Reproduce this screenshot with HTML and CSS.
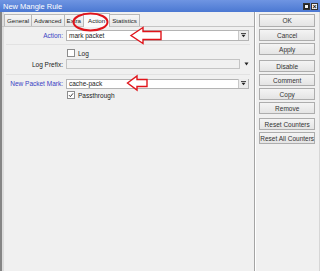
FILE: index.html
```html
<!DOCTYPE html>
<html lang="en">
<head>
    <meta charset="UTF-8">
    <title>New Mangle Rule</title>
    <link rel="stylesheet" href="styles.css">
</head>
<body>
<div class="window">
    <div class="titlebar">
        <span class="title">New Mangle Rule</span>
        <span class="ctrls">
            <span class="ctrl"><span class="sq"></span></span>
            <span class="ctrl close">&times;</span>
        </span>
    </div>

    <div class="content">
        <!-- left: tabs and form -->
        <div class="main">
            <div class="tabs">
                <span class="tab">General</span>
                <span class="tab">Advanced</span>
                <span class="tab">Extra</span>
                <span class="tab active">Action</span>
                <span class="tab">Statistics</span>
            </div>

            <div class="panel">
                <div class="row">
                    <label class="lbl link">Action:</label>
                    <div class="field">
                        <span class="val">mark packet</span>
                        <span class="drop"><svg width="5" height="5" viewBox="0 0 5 5"><path d="M0 0.5h5" stroke="#222" stroke-width="0.8"/><path d="M0.5 1.8h4L2.5 4.3z" fill="#222"/></svg></span>
                    </div>
                </div>
                <div class="sep"></div>
                <div class="row check-row">
                    <span class="box"></span>
                    <span class="check-label">Log</span>
                </div>
                <div class="row short">
                    <label class="lbl">Log Prefix:</label>
                    <div class="field disabled"></div>
                    <span class="loose-drop"><svg width="5" height="4" viewBox="0 0 5 4"><path d="M0.5 0.5h4L2.5 3.5z" fill="#222"/></svg></span>
                </div>
                <div class="sep wide"></div>
                <div class="row npm">
                    <label class="lbl link">New Packet Mark:</label>
                    <div class="field">
                        <span class="val">cache-pack</span>
                        <span class="drop"><svg width="5" height="5" viewBox="0 0 5 5"><path d="M0 0.5h5" stroke="#222" stroke-width="0.8"/><path d="M0.5 1.8h4L2.5 4.3z" fill="#222"/></svg></span>
                    </div>
                </div>
                <div class="row check-row pass">
                    <span class="box checked"><svg width="6" height="6" viewBox="0 0 6 6"><path d="M1 3.2l1.4 1.4L5 1.4" fill="none" stroke="#222" stroke-width="0.9"/></svg></span>
                    <span class="check-label">Passthrough</span>
                </div>
            </div>

            <!-- red annotations drawn over the form -->
            <svg class="marks" width="255" height="100" viewBox="0 0 255 100">
                <ellipse cx="90.5" cy="10" rx="17" ry="8.5" fill="none" stroke="#e0141b" stroke-width="2"/>
                <path d="M131 23.5 L143 15.5 L143 19.5 L161 19.5 L161 27.5 L143 27.5 L143 31.5 Z" fill="#fff" stroke="#e0141b" stroke-width="1.4" stroke-linejoin="miter"/>
                <path d="M127.5 71 L137 64 L137 67.5 L147 67.5 L147 74.5 L137 74.5 L137 78 Z" fill="#fff" stroke="#e0141b" stroke-width="1.4"/>
            </svg>
        </div>

        <!-- right: command buttons -->
        <div class="side">
            <button class="btn first">OK</button>
            <button class="btn">Cancel</button>
            <button class="btn">Apply</button>
            <button class="btn group">Disable</button>
            <button class="btn">Comment</button>
            <button class="btn">Copy</button>
            <button class="btn">Remove</button>
            <button class="btn group2">Reset Counters</button>
            <button class="btn">Reset All Counters</button>
        </div>
    </div>
</div>
</body>
</html>
```

FILE: styles.css
```css
body {
    margin: 0;
    padding: 0;
    font-family: "Liberation Sans", Arial, sans-serif;
    font-size: 6.5px;
    color: #222;
    background-color: #f0f0f0;
}

.window {
    width: 320px;
    height: 271px;
    overflow: hidden;
    display: flex;
    flex-direction: column;
}

.titlebar {
    height: 12px;
    flex-shrink: 0;
    background: linear-gradient(#6f95e2, #4b78d2);
    display: flex;
    align-items: center;
    justify-content: space-between;
    padding: 0 2px 0 3px;
}

.title {
    color: #fff;
    font-size: 7.5px;
}

.ctrls {
    display: flex;
    gap: 1px;
}

.ctrl {
    width: 7px;
    height: 7px;
    background-color: #f4f4f4;
    border: 1px solid #333;
    display: flex;
    align-items: center;
    justify-content: center;
    box-sizing: border-box;
}

.ctrl .sq {
    width: 3px;
    height: 3px;
    border: 1px solid #222;
}

.ctrl.close {
    font-size: 7px;
    line-height: 5px;
    font-weight: bold;
    color: #111;
}

.content {
    flex-grow: 1;
    display: flex;
}

.main {
    position: relative;
    width: 253px;
    border-left: 2px solid #858585;
    box-shadow: inset 2px 0 #dcdcdc;
}

.tabs {
    display: flex;
    align-items: flex-end;
    height: 14px;
    padding-left: 2px;
    border-bottom: 1px solid #c4c4c4;
}

.tab {
    height: 11px;
    line-height: 11px;
    padding: 0 2px;
    font-size: 6.2px;
    border: 1px solid #b8b8b8;
    border-bottom: none;
    margin-right: -1px;
    background: linear-gradient(#f6f6f6, #e6e6e6);
}

.tab.active {
    height: 13px;
    line-height: 13px;
    background: #fbfbfb;
    position: relative;
    margin-bottom: -1px;
    padding: 0 4px;
}

.panel {
    padding-top: 3px;
}

.row {
    display: flex;
    align-items: center;
    height: 11px;
}

.lbl {
    width: 61px;
    text-align: right;
    padding-right: 3px;
    flex-shrink: 0;
}

.lbl.link {
    color: #3a3fc4;
}

.field {
    width: 183px;
    height: 11px;
    box-sizing: border-box;
    border: 1px solid #b4b4b4;
    background-color: #fff;
    display: flex;
    align-items: center;
    justify-content: space-between;
}

.field .val {
    padding-left: 2px;
}

.drop {
    width: 9px;
    height: 9px;
    border-left: 1px solid #c8c8c8;
    background-color: #ececec;
    display: flex;
    align-items: center;
    justify-content: center;
}

.field.disabled {
    width: 174px;
    height: 10px;
    background-color: #f0f0f0;
    border-color: #c4c4c4;
}

.loose-drop {
    margin-left: 4px;
    display: flex;
}

.sep {
    height: 1px;
    margin: 3px 4px 0 4px;
    background-color: #e2e2e2;
}

.sep.wide {
    margin-top: 5px;
}

.check-row {
    margin-top: 4px;
    height: 8px;
    padding-left: 65px;
}

.short {
    margin-top: 2px;
    height: 10px;
}

.npm {
    margin-top: 3px;
}

.npm .field {
    height: 10px;
    width: 183px;
}

.pass {
    margin-top: 2px;
}

.box {
    width: 6px;
    height: 6px;
    border: 1px solid #8c8c8c;
    background-color: #fff;
    display: flex;
    align-items: center;
    justify-content: center;
}

.check-label {
    margin-left: 3px;
}

.marks {
    position: absolute;
    left: -2px;
    top: 0;
    pointer-events: none;
}

.side {
    width: 58px;
    border-left: 1px solid #a4a4a4;
    box-shadow: inset 1px 0 #fff;
    border-right: 1px solid #d6d6d6;
    padding: 0 2px 0 4px;
    display: flex;
    flex-direction: column;
}

.btn {
    width: 56px;
    height: 12px;
    margin-top: 2px;
    padding: 0;
    font-family: "Liberation Sans", Arial, sans-serif;
    font-size: 6.5px;
    color: #333;
    border: 1px solid #adadad;
    background: linear-gradient(#f4f4f4, #e4e4e4);
}

.btn.first {
    margin-top: 2px;
    height: 13px;
}

.btn.group {
    margin-top: 5px;
}

.btn.group2 {
    margin-top: 4px;
}
```
